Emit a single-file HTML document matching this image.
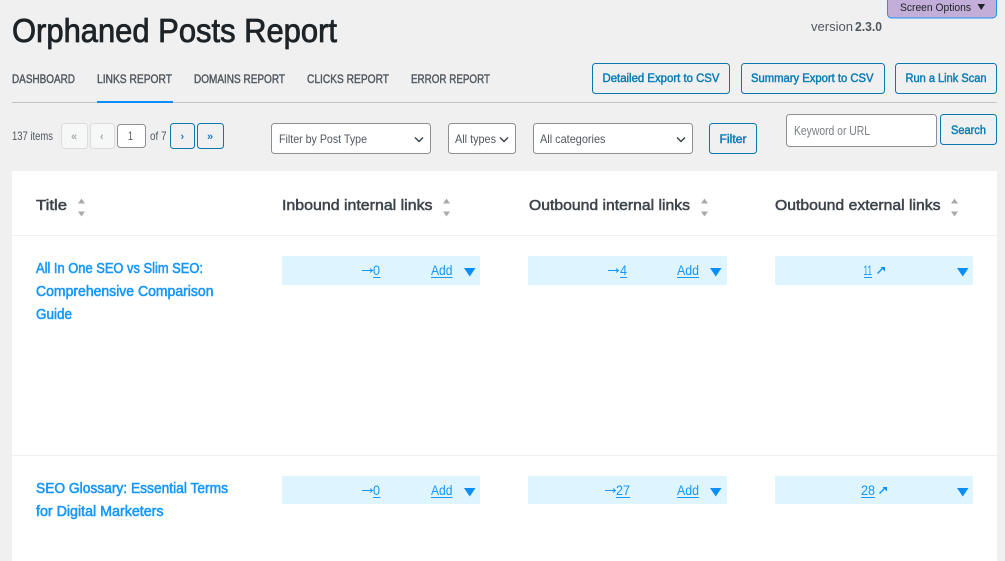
<!DOCTYPE html>
<html lang="en">
<head>
<meta charset="utf-8">
<title>Orphaned Posts Report</title>
<style>
html,body{margin:0;padding:0;width:1005px;height:561px;overflow:hidden;background:#f0f0f1}
svg{display:block}
text{font-family:"Liberation Sans",sans-serif;white-space:pre}
.h1{font-size:33px;fill:#1d2327;stroke:#1d2327;stroke-width:.8px}
.tab{font-size:11.5px;fill:#50575e;stroke:#50575e;stroke-width:.4px}
.btn{font-size:11.5px;fill:#0a7cb4;stroke:#0a7cb4;stroke-width:.45px}
.s{font-size:12px;fill:#50575e}
.th{font-size:15px;fill:#3c434a;stroke:#3c434a;stroke-width:.5px}
.a{font-size:14.5px;fill:#1597fb;stroke:#1597fb;stroke-width:.55px}
.l{font-size:14px;fill:#1597fb}
.box{fill:#def4ff}
.ctl{fill:#fff;stroke:#8c8f94;stroke-width:1}
.bb{fill:none;stroke:#0a78ae;stroke-width:1}
.off{fill:#f6f7f7;stroke:#dcdcde;stroke-width:1}
.chev{fill:none;stroke:#3c434a;stroke-width:1.5}
.sort{fill:#a7aaad}
.tri{fill:#0a8ffa}
.ln{stroke:#1597fb;stroke-width:1;fill:none}
.ext{stroke:#1597fb;stroke-width:1.5;fill:none}
</style>
</head>
<body>
<svg width="1005" height="561" viewBox="0 0 1005 561" xmlns="http://www.w3.org/2000/svg">
<rect width="1005" height="561" fill="#f0f0f1"/>

<!-- Screen options -->
<rect x="887.5" y="-6" width="109" height="24" rx="4" fill="#c2aed8" stroke="#1a94f5" stroke-width="1"/>
<text x="900" y="11" textLength="71" lengthAdjust="spacingAndGlyphs" font-size="11" fill="#1d2327">Screen Options</text>
<path d="M977.5 4h7.5l-3.75 6z" fill="#1d2327"/>

<!-- Heading -->
<text class="h1" x="12" y="42" textLength="325" lengthAdjust="spacingAndGlyphs">Orphaned Posts Report</text>
<text x="811" y="31" textLength="42" lengthAdjust="spacingAndGlyphs" font-size="13" fill="#50575e">version</text>
<text x="855" y="31" textLength="27" lengthAdjust="spacingAndGlyphs" font-size="13" font-weight="bold" fill="#50575e">2.3.0</text>

<!-- Tabs -->
<text class="tab" x="12" y="83" textLength="63" lengthAdjust="spacingAndGlyphs">DASHBOARD</text>
<text class="tab" x="97" y="83" textLength="75" lengthAdjust="spacingAndGlyphs">LINKS REPORT</text>
<text class="tab" x="194" y="83" textLength="91" lengthAdjust="spacingAndGlyphs">DOMAINS REPORT</text>
<text class="tab" x="307" y="83" textLength="82" lengthAdjust="spacingAndGlyphs">CLICKS REPORT</text>
<text class="tab" x="411" y="83" textLength="79" lengthAdjust="spacingAndGlyphs">ERROR REPORT</text>
<rect x="12" y="102" width="985" height="1" fill="#c3c4c7"/>
<rect x="97" y="101" width="76" height="2" fill="#0a8ffa"/>

<!-- Top buttons -->
<rect class="bb" x="592.5" y="63.5" width="137" height="30" rx="3"/>
<text class="btn" x="602.5" y="82" textLength="117" lengthAdjust="spacingAndGlyphs">Detailed Export to CSV</text>
<rect class="bb" x="741.5" y="63.5" width="143" height="30" rx="3"/>
<text class="btn" x="751" y="82" textLength="122.500" lengthAdjust="spacingAndGlyphs">Summary Export to CSV</text>
<rect class="bb" x="895.500" y="63.5" width="101" height="30" rx="3"/>
<text class="btn" x="905.5" y="82" textLength="81" lengthAdjust="spacingAndGlyphs">Run a Link Scan</text>

<!-- Pagination -->
<text class="s" x="12" y="140" textLength="41" lengthAdjust="spacingAndGlyphs">137 items</text>
<rect class="off" x="61.5" y="123.5" width="26" height="25" rx="3"/>
<text x="71" y="140" font-size="11" font-weight="bold" fill="#a7aaad">«</text>
<rect class="off" x="90.5" y="123.5" width="24" height="25" rx="3"/>
<text x="100" y="140" font-size="11" font-weight="bold" fill="#a7aaad">‹</text>
<rect class="ctl" x="117.5" y="124.500" width="28" height="23" rx="3"/>
<text x="128" y="140" font-size="12" textLength="5" lengthAdjust="spacingAndGlyphs" fill="#50575e">1</text>
<text class="s" x="150" y="140" textLength="16.500" lengthAdjust="spacingAndGlyphs">of 7</text>
<rect class="bb" x="170.5" y="123.5" width="24" height="25" rx="3"/>
<text x="180.5" y="140" font-size="11" font-weight="bold" fill="#1a7ed0">›</text>
<rect class="bb" x="197.5" y="123.5" width="26" height="25" rx="3"/>
<text x="207" y="140" font-size="11" font-weight="bold" fill="#1a7ed0">»</text>

<!-- Filters -->
<rect class="ctl" x="271.5" y="123.5" width="159" height="30" rx="3"/>
<text class="s" x="279" y="143" textLength="88" lengthAdjust="spacingAndGlyphs">Filter by Post Type</text>
<path class="chev" d="M415 137.500l4 4 4-4"/>
<rect class="ctl" x="448.5" y="123.5" width="67" height="30" rx="3"/>
<text class="s" x="455" y="143" textLength="41" lengthAdjust="spacingAndGlyphs">All types</text>
<path class="chev" d="M500 137.500l4 4 4-4"/>
<rect class="ctl" x="533.5" y="123.5" width="159" height="30" rx="3"/>
<text class="s" x="540" y="143" textLength="65.500" lengthAdjust="spacingAndGlyphs">All categories</text>
<path class="chev" d="M677 137.500l4 4 4-4"/>
<rect class="bb" x="709.5" y="123.5" width="47" height="30" rx="3"/>
<text class="btn" x="719.500" y="143" textLength="27" lengthAdjust="spacingAndGlyphs">Filter</text>
<rect class="ctl" x="786.5" y="114.5" width="150" height="32" rx="3"/>
<text x="794" y="135" textLength="76" lengthAdjust="spacingAndGlyphs" font-size="12.500" fill="#7a7f85">Keyword or URL</text>
<rect class="bb" x="940.5" y="114.5" width="56" height="30" rx="3"/>
<text class="btn" x="951" y="134" textLength="35" lengthAdjust="spacingAndGlyphs">Search</text>

<!-- Table -->
<rect x="12" y="171" width="985" height="390" fill="#fff"/>
<rect x="12" y="235" width="985" height="1" fill="#f0f0f1"/>
<rect x="12" y="455" width="985" height="1" fill="#f0f0f1"/>

<text class="th" x="36" y="210" textLength="31" lengthAdjust="spacingAndGlyphs">Title</text>
<path class="sort" d="M81.500 198.500l3.500 5h-7zM78 211.500h7l-3.500 5z"/>
<text class="th" x="282" y="210" textLength="150.500" lengthAdjust="spacingAndGlyphs">Inbound internal links</text>
<path class="sort" d="M446.500 198.500l3.500 5h-7zM443 211.500h7l-3.500 5z"/>
<text class="th" x="529" y="210" textLength="161" lengthAdjust="spacingAndGlyphs">Outbound internal links</text>
<path class="sort" d="M704.500 198.500l3.500 5h-7zM701 211.500h7l-3.500 5z"/>
<text class="th" x="775" y="210" textLength="165.500" lengthAdjust="spacingAndGlyphs">Outbound external links</text>
<path class="sort" d="M954.500 198.500l3.500 5h-7zM951 211.500h7l-3.500 5z"/>

<!-- Row 1 -->
<text class="a" x="36" y="273" textLength="167" lengthAdjust="spacingAndGlyphs">All In One SEO vs Slim SEO:</text>
<text class="a" x="36" y="296" textLength="177.500" lengthAdjust="spacingAndGlyphs">Comprehensive Comparison</text>
<text class="a" x="36" y="319" textLength="36" lengthAdjust="spacingAndGlyphs">Guide</text>

<rect class="box" x="282" y="256" width="198" height="29" rx="2"/>
<path class="ln" d="M362 270.500h10M370 268.500l2.500 2-2.500 2"/>
<text class="l" x="373" y="275" textLength="7" lengthAdjust="spacingAndGlyphs">0</text>
<path class="ln" d="M373 277.500h7.500"/>
<text class="l" x="431" y="275" textLength="21.500" lengthAdjust="spacingAndGlyphs">Add</text>
<path class="ln" d="M431 277.500h21.500"/>
<path class="tri" d="M464 268h11.500l-5.750 8.500z"/>

<rect class="box" x="528" y="256" width="199" height="29" rx="2"/>
<path class="ln" d="M608 270.500h10M616 268.500l2.500 2-2.500 2"/>
<text class="l" x="620" y="275" textLength="7" lengthAdjust="spacingAndGlyphs">4</text>
<path class="ln" d="M620 277.500h7"/>
<text class="l" x="677" y="275" textLength="22" lengthAdjust="spacingAndGlyphs">Add</text>
<path class="ln" d="M677 277.500h22"/>
<path class="tri" d="M710 268h11.500l-5.750 8.500z"/>

<rect class="box" x="775" y="256" width="198" height="29" rx="2"/>
<text class="l" x="863.500" y="275" textLength="4.500" lengthAdjust="spacingAndGlyphs">1</text>
<text class="l" x="867.500" y="275" textLength="4.500" lengthAdjust="spacingAndGlyphs">1</text>
<path class="ln" d="M864 277.500h8"/>
<path class="ext" d="M877.500 273.500l5-5"/><path class="tri" d="M880.500 267h4.500v4.500z"/>
<path class="tri" d="M957 268h11.500l-5.750 8.500z"/>

<!-- Row 2 -->
<text class="a" x="36" y="493" textLength="192" lengthAdjust="spacingAndGlyphs">SEO Glossary: Essential Terms</text>
<text class="a" x="36" y="516" textLength="127.500" lengthAdjust="spacingAndGlyphs">for Digital Marketers</text>

<rect class="box" x="282" y="476" width="198" height="28" rx="2"/>
<path class="ln" d="M362 490.500h10M370 488.500l2.500 2-2.500 2"/>
<text class="l" x="373" y="495" textLength="7" lengthAdjust="spacingAndGlyphs">0</text>
<path class="ln" d="M373 497.500h7.500"/>
<text class="l" x="431" y="495" textLength="21.500" lengthAdjust="spacingAndGlyphs">Add</text>
<path class="ln" d="M431 497.500h21.500"/>
<path class="tri" d="M464 488h11.500l-5.750 8.500z"/>

<rect class="box" x="528" y="476" width="199" height="28" rx="2"/>
<path class="ln" d="M605 490.500h10M613 488.500l2.500 2-2.500 2"/>
<text class="l" x="616" y="495" textLength="14" lengthAdjust="spacingAndGlyphs">27</text>
<path class="ln" d="M616 497.500h14"/>
<text class="l" x="677" y="495" textLength="22" lengthAdjust="spacingAndGlyphs">Add</text>
<path class="ln" d="M677 497.500h22"/>
<path class="tri" d="M710 488h11.500l-5.750 8.500z"/>

<rect class="box" x="775" y="476" width="198" height="28" rx="2"/>
<text class="l" x="861" y="495" textLength="14" lengthAdjust="spacingAndGlyphs">28</text>
<path class="ln" d="M861 497.500h14"/>
<path class="ext" d="M879.500 493.500l5-5"/><path class="tri" d="M882.500 487h4.500v4.500z"/>
<path class="tri" d="M957 488h11.500l-5.750 8.500z"/>
</svg>
</body>
</html>
